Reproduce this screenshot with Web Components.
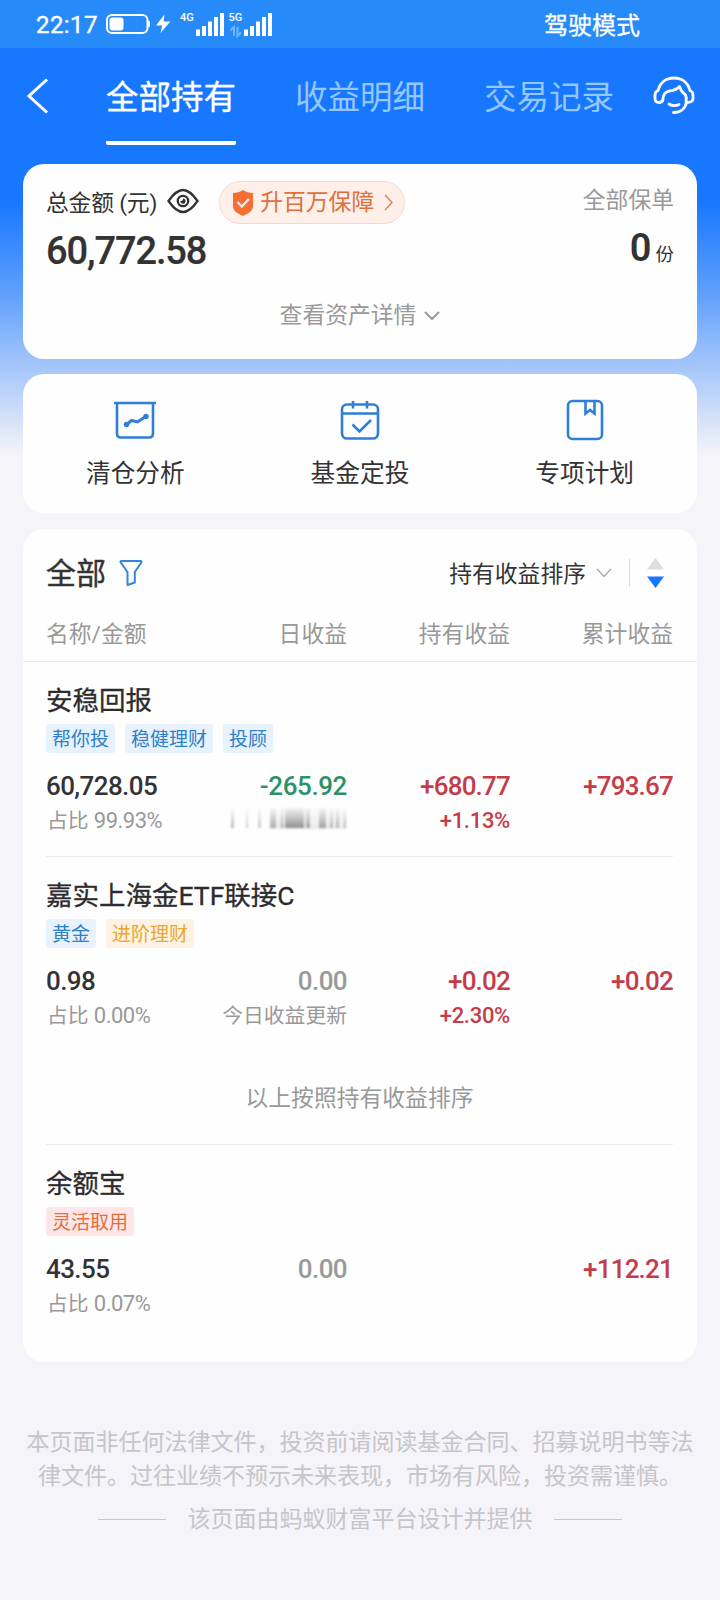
<!DOCTYPE html>
<html lang="zh-CN">
<head>
<meta charset="utf-8">
<title>全部持有</title>
<style>
  html { background: #f5f4f8; }

  body {
    margin: 0;
    min-height: 1600px;
    font-family: Roboto, "Noto Sans CJK SC", sans-serif;
    color: #333;
    background: linear-gradient(#1777ff 0, #1777ff 200px, #5c9efc 290px, #a3c5fa 365px, #f5f4f8 455px);
  }
</style>
</head>
<body>
<fund-status-bar time="22:17">驾驶模式</fund-status-bar>
<fund-nav>
  <fund-tab active>全部持有</fund-tab>
  <fund-tab>收益明细</fund-tab>
  <fund-tab>交易记录</fund-tab>
</fund-nav>

<fund-card>
  <fund-total amount="60,772.58" policies="0"></fund-total>
</fund-card>

<fund-card>
  <fund-tools>
    <fund-tool icon="chart">清仓分析</fund-tool>
    <fund-tool icon="calendar">基金定投</fund-tool>
    <fund-tool icon="book">专项计划</fund-tool>
  </fund-tools>
</fund-card>

<fund-card last>
  <fund-list-head></fund-list-head>
  <fund-row name="安稳回报" amount="60,728.05" ratio="99.93%" day="-265.92" masked hold="+680.77" rate="+1.13%" total="+793.67" line>
    <fund-tag>帮你投</fund-tag>
    <fund-tag>稳健理财</fund-tag>
    <fund-tag>投顾</fund-tag>
  </fund-row>
  <fund-row name="嘉实上海金ETF联接C" amount="0.98" ratio="0.00%" day="0.00" day-note="今日收益更新" hold="+0.02" rate="+2.30%" total="+0.02">
    <fund-tag>黄金</fund-tag>
    <fund-tag tone="gold">进阶理财</fund-tag>
  </fund-row>
  <fund-note>以上按照持有收益排序</fund-note>
  <fund-row name="余额宝" amount="43.55" ratio="0.07%" day="0.00" total="+112.21">
    <fund-tag tone="red">灵活取用</fund-tag>
  </fund-row>
</fund-card>

<fund-footer></fund-footer>

<script>
class StatusBar extends HTMLElement {
    constructor() {
        super();
        this.attachShadow({ mode: "open" });
        this.shadowRoot.innerHTML = `
        <style>
        :host {
          display: flex;
          align-items: center;
          height: 48px;
          padding: 0 80px 0 36px;
          box-sizing: border-box;
          background: #268bf9;
          color: #fff;
          font-size: 24px;
        }

        svg { display: block; margin-left: 7px; }
        .time { padding-top: 2px; letter-spacing: .4px; -webkit-text-stroke: .4px; }
        .mode { margin-left: auto; margin-top: -2px; -webkit-text-stroke: .3px; }
        </style>
        <span class="time">${this.getAttribute("time")}</span>
        <svg width="168" height="30" viewBox="105 9 168 30" fill="#fff">
          <rect x="107" y="15" width="40.500" height="18" rx="5" fill="none" stroke="#fff" stroke-width="2"/>
          <rect x="109.500" y="17.500" width="14" height="13" rx="3"/>
          <rect x="147.500" y="21" width="2.500" height="6" rx="1"/>
          <path d="M164.500 14.500 156 25.500h6.200l-1.700 7.500 9.800-11.500h-6.800z"/>
          <g font-family="Roboto" font-size="11" font-weight="500">
            <text x="180" y="21">4G</text>
            <text x="228.500" y="21">5G</text>
          </g>
          <path d="M196 29.500h4v6.500h-4zM202 26h4v10h-4zM208 21.500h4V36h-4zM214 17h4v19h-4zM220 13h4v23h-4z"/>
          <path d="M244 29.500h4v6.500h-4zM250 26h4v10h-4zM256 21.500h4V36h-4zM262 17h4v19h-4zM268 13h4v23h-4z"/>
          <path d="M230.500 30.500l3.500-3.500v9M241 32.500l-3.500 3.500v-9" fill="none" stroke="#6fb5fd" stroke-width="2"/>
        </svg>
        <span class="mode"><slot></slot></span>
        `;
    }
}

class Nav extends HTMLElement {
    constructor() {
        super();
        this.attachShadow({ mode: "open" });
        this.shadowRoot.innerHTML = `
        <style>
        :host {
          display: flex;
          height: 116px;
          padding: 0 25px 0 26px;
          box-sizing: border-box;
        }

        svg { display: block; flex: none; }
        .back { margin-top: 30px; }
        .help { margin-top: 27px; }

        .tabs {
          flex: 1;
          display: flex;
          justify-content: space-between;
          padding: 0 39px 0 57px;
        }
        </style>
        <svg class="back" width="23" height="36" viewBox="0 0 23 36" fill="none" stroke="#fff" stroke-width="3">
          <path d="M21 1.500 3 18l18 16.500"/>
        </svg>
        <div class="tabs"><slot></slot></div>
        <svg class="help" width="42" height="40" viewBox="0 0 42 40" fill="none" stroke="#fff" stroke-width="2.800" stroke-linecap="round" stroke-linejoin="round">
          <path d="M5 15.500C7 7.500 13 3 21 3s14 4.500 16 12.500"/>
          <path d="M5 15.500Q2 16.500 2 20.500v3q0 4 4 4 3.500 0 4-3C10 20 12 17 16 16c4-.5 7-.5 10.500-4.500 1 4 3.500 6.500 6 8.500 1 2 1 4 .5 6.500"/>
          <path d="M37 15.500q3 1 3 5v3q0 4-6.500 4"/>
          <path d="M33.500 27C32.500 34 27 37.500 20.500 37.500"/>
          <path d="M16 29c3 2 6.500 2 10 .5"/>
        </svg>
        `;
    }
}

class Tab extends HTMLElement {
    constructor() {
        super();
        this.attachShadow({ mode: "open" });
        this.shadowRoot.innerHTML = `
        <style>
        :host {
          display: block;
          height: 97px;
          box-sizing: border-box;
          padding-top: 26px;
          font-size: 32.500px;
          line-height: 48px;
          color: #94c6ff;
        }

        :host([active]) {
          color: #fff;
          -webkit-text-stroke: .3px;
          background: linear-gradient(#fff, #fff) bottom / 100% 4px no-repeat;
          border-radius: 2px;
        }
        </style>
        <slot></slot>
        `;
    }
}

class Card extends HTMLElement {
    constructor() {
        super();
        this.attachShadow({ mode: "open" });
        this.shadowRoot.innerHTML = `
        <style>
        :host {
          display: block;
          margin: 0 23px 15px;
          border-radius: 21px;
          background: #fefefe;
          overflow: hidden;
        }

        :host([last]) {
          margin-top: 16px;
          margin-bottom: 0;
          padding-bottom: 42px;
        }
        </style>
        <slot></slot>
        `;
    }
}

class Total extends HTMLElement {
    constructor() {
        super();
        this.attachShadow({ mode: "open" });
        this.shadowRoot.innerHTML = `
        <style>
        :host {
          display: block;
          height: 195px;
          padding: 17px 23px 0;
          box-sizing: border-box;
          font-size: 22.800px;
        }

        svg { display: block; flex: none; }
        .line { display: flex; justify-content: space-between; }
        .left { display: flex; align-items: center; height: 43px; }
        .label { line-height: 34px; padding-top: 2px; white-space: pre; letter-spacing: -.2px; }
        .eye { margin: -3px 20px 0 10px; }

        .pill {
          display: flex;
          align-items: center;
          height: 43px;
          width: 186px;
          box-sizing: border-box;
          padding-left: 12px;
          border: 1px solid #f5d8cc;
          border-radius: 22px;
          background: #fef0e9;
          color: #df6f3c;
        }

        .pill span { margin: 0 10px 0 6px; line-height: 34px; }
        .grey { color: #999; line-height: 40px; }

        .money {
          padding-top: 3px;
          font-size: 38px;
          font-weight: 500;
          line-height: 48px;
          letter-spacing: -1.1px;
          -webkit-text-stroke: .2px;
        }

        .count { line-height: 48px; font-size: 18.500px; }
        .count b { font-size: 38px; font-weight: 600; margin-right: 6px; letter-spacing: -2px; }

        .more {
          display: flex;
          justify-content: center;
          align-items: center;
          gap: 8px;
          margin-top: 20px;
          line-height: 34px;
          color: #999;
        }
        </style>
        <div class="line">
          <div class="left">
            <span class="label">总金额 (元)</span>
            <svg class="eye" width="32" height="26" viewBox="0 0 32 26" fill="none" stroke="#333" stroke-width="2.300">
              <path d="M1.500 13C7 5 11.500 2 16 2s9 3 14.500 11C25 21 20.500 24 16 24S7 21 1.500 13z"/>
              <circle cx="16" cy="13" r="5.200"/>
              <path d="M16 10.500a2.600 2.600 0 1 1-2.600 2.600q2.600 0 2.600-2.600z" fill="#333" stroke="none"/>
            </svg>
            <div class="pill">
              <svg width="22" height="28" viewBox="0 0 22 28">
                <path d="M11 1c3 2 6 3 10 3v13c0 5-4.500 7.500-10 10C5.500 24.500 1 22 1 17V4c4 0 7-1 10-3z" fill="#f36f35"/>
                <path d="M5.500 13l4.300 4.500 7-7.500" fill="none" stroke="#ffe9df" stroke-width="2.300"/>
              </svg>
              <span>升百万保障</span>
              <svg width="9" height="17" viewBox="0 0 9 17" fill="none" stroke="#dd835d" stroke-width="1.500"><path d="M1 1l7 7.500L1 16"/></svg>
            </div>
          </div>
          <span class="grey">全部保单</span>
        </div>
        <div class="line">
          <span class="money">${this.getAttribute("amount")}</span>
          <span class="count"><b>${this.getAttribute("policies")}</b>份</span>
        </div>
        <div class="more">查看资产详情
          <svg width="16" height="10" viewBox="0 0 16 10" fill="none" stroke="#999" stroke-width="2"><path d="M1 1l7 7 7-7"/></svg>
        </div>
        `;
    }
}

class Tools extends HTMLElement {
    constructor() {
        super();
        this.attachShadow({ mode: "open" });
        this.shadowRoot.innerHTML = `
        <style>
        :host {
          display: grid;
          grid-template-columns: repeat(3, 1fr);
          height: 139px;
        }
        </style>
        <slot></slot>
        `;
    }
}

const toolIcons = {
    chart: `<path d="M1 4h42M4 4v30.500q0 4 4 4h28q4 0 4-4V4"/>
      <path d="M13 26l5.500-4.500 6 1.500 9-6" stroke-width="3"/>
      <g fill="#2e7fd8" stroke="none"><circle cx="13.500" cy="25.500" r="2.700"/><circle cx="33" cy="17.500" r="2.700"/></g>`,
    calendar: `<rect x="4" y="5.500" width="36" height="34" rx="5"/>
      <path d="M4 14.500h36M15 2v7.500M29 2v7.500M14.500 25.500l7 7L33 21"/>`,
    book: `<rect x="5" y="2" width="34" height="38" rx="4.500"/>
      <path d="M22.500 2v12.500l4.500-3.500 4.500 3.500V2"/>`,
};

class Tool extends HTMLElement {
    constructor() {
        super();
        this.attachShadow({ mode: "open" });
        this.shadowRoot.innerHTML = `
        <style>
        :host {
          display: flex;
          flex-direction: column;
          align-items: center;
          padding-top: 25px;
          font-size: 24.700px;
          line-height: 36px;
        }

        svg { display: block; margin-bottom: 15px; }
        </style>
        <svg width="44" height="42" viewBox="0 0 44 42" fill="none" stroke="#2e7fd8" stroke-width="2.600">${toolIcons[this.getAttribute("icon")]}</svg>
        <span><slot></slot></span>
        `;
    }
}

class ListHead extends HTMLElement {
    constructor() {
        super();
        this.attachShadow({ mode: "open" });
        this.shadowRoot.innerHTML = `
        <style>
        :host {
          display: block;
          padding: 22px 23px 0;
          border-bottom: 1px solid #e8e8e8;
          font-size: 22.800px;
        }

        svg { display: block; flex: none; }
        .bar { display: flex; align-items: center; height: 44px; }
        .all { font-size: 30px; margin-right: 13px; padding-top: 2px; line-height: 44px; -webkit-text-stroke: .4px; }
        .sort { margin-left: auto; padding-top: 3px; line-height: 34px; }
        .arrow { margin: 0 17px 0 10px; }
        .split { width: 1px; height: 28px; margin-right: 17px; background: #ddd; }
        .order { margin-right: 10px; }

        .cols {
          display: grid;
          grid-template-columns: 138px 163px 163px 163px;
          padding: 22px 0 9px;
          line-height: 35px;
          color: #999;
          text-align: right;
        }

        .cols :first-child { text-align: left; }
        </style>
        <div class="bar">
          <span class="all">全部</span>
          <svg width="24" height="28" viewBox="0 0 24 28" fill="none" stroke="#3584dd" stroke-width="2" stroke-linejoin="round">
            <path d="M2.500 2h19q1.500 0 .8 1.500L15.800 13v10.500L8.500 26V13L1.700 3.500Q1 2 2.500 2z"/>
          </svg>
          <span class="sort">持有收益排序</span>
          <svg class="arrow" width="16" height="10" viewBox="0 0 16 10" fill="none" stroke="#aaa" stroke-width="1.400"><path d="M1 1l7 7.500L15 1"/></svg>
          <span class="split"></span>
          <svg class="order" width="17" height="32" viewBox="0 0 17 32">
            <path d="M8.500 1 17 12.500H0z" fill="#ddd"/>
            <path d="M8.500 31 17 19.500H0z" fill="#1777ff"/>
          </svg>
        </div>
        <div class="cols"><span>名称/金额</span><span>日收益</span><span>持有收益</span><span>累计收益</span></div>
        `;
    }
}

// positive is red, negative is green, zero stays grey
function toneOf(value) {
    if (value.startsWith("+")) return "up";
    if (value.startsWith("-")) return "down";
    return "flat";
}

class Row extends HTMLElement {
    constructor() {
        super();
        this.attachShadow({ mode: "open" });
        const get = (name) => this.getAttribute(name) || "";
        const dayNote = this.hasAttribute("masked") ? "<fund-mask></fund-mask>" : get("day-note");
        this.shadowRoot.innerHTML = `
        <style>
        :host {
          display: block;
          margin: 0 24px 0 23px;
          padding-top: 20px;
        }

        :host([line]) {
          padding-bottom: 19px;
          border-bottom: 1px solid #ececec;
        }

        .name { font-size: 26.500px; line-height: 38px; color: #2c2c2e; -webkit-text-stroke: .3px; }
        .tags { display: flex; gap: 10px; margin: 4px 0 16px; }

        .grid {
          display: grid;
          grid-template-columns: 138px 163px 163px 163px;
          grid-template-rows: 34px 34px;
          line-height: 34px;
          text-align: right;
        }

        .left { text-align: left; }
        .num { font-size: 26px; font-weight: 500; letter-spacing: -.6px; }
        .note { padding: 1px 0 0 1px; font-size: 20.800px; color: #999; white-space: nowrap; }
        .pct { font-size: 22px; letter-spacing: -.5px; }
        .rate { padding-top: 1px; font-size: 22px; font-weight: 500; letter-spacing: -.3px; }
        .up { color: #c53b48; }
        .num.up { letter-spacing: -.8px; }
        .down { color: #2b9268; }
        .num.down { letter-spacing: -.4px; }
        .flat { color: #999; }
        </style>
        <div class="name">${get("name")}</div>
        <div class="tags"><slot></slot></div>
        <div class="grid">
          <span class="num left">${get("amount")}</span>
          <span class="num ${toneOf(get("day"))}">${get("day")}</span>
          <span class="num up">${get("hold")}</span>
          <span class="num up">${get("total")}</span>
          <span class="note left">占比 <span class="pct">${get("ratio")}</span></span>
          <span class="note">${dayNote}</span>
          <span class="rate up">${get("rate")}</span>
        </div>
        `;
    }
}

// scrambled figures under the day's profit
class Mask extends HTMLElement {
    constructor() {
        super();
        this.attachShadow({ mode: "open" });
        const bars = [[3, 3, .6], [18, 2, .45], [30, 3, .5], [42, 6, .7], [53, 2, .8], [57, 19, 1],
            [78, 4, .8], [91, 7, .8], [102, 3, .6], [108, 3, .6], [116, 2, .6]];
        this.shadowRoot.innerHTML = `
        <style>
        :host { display: flex; justify-content: flex-end; padding-top: 4px; }
        svg { display: block; filter: blur(.8px); }
        </style>
        <svg width="119" height="21" viewBox="0 0 119 21">
          <defs>
            <linearGradient id="fade" x2="0" y2="1">
              <stop offset="0" stop-color="#aaa" stop-opacity=".12"/>
              <stop offset="1" stop-color="#8f8f8f"/>
            </linearGradient>
          </defs>
          <rect x="42" width="76" height="21" fill="url(#fade)" opacity=".18"/>
          ${bars.map(([x, w, o]) => `<rect x="${x}" width="${w}" height="20" fill="url(#fade)" opacity="${o}"/>`).join("")}
        </svg>
        `;
    }
}

class Tag extends HTMLElement {
    constructor() {
        super();
        this.attachShadow({ mode: "open" });
        this.shadowRoot.innerHTML = `
        <style>
        :host {
          display: block;
          height: 29px;
          padding: 1px 6px 0;
          box-sizing: border-box;
          border-radius: 3px;
          font-size: 19px;
          line-height: 29px;
          color: #2f7fc9;
          background: #e7f2fd;
        }

        :host([tone="gold"]) { color: #e8a52f; background: #fef3e2; }
        :host([tone="red"]) { color: #e2703a; background: #fde5e8; }
        </style>
        <slot></slot>
        `;
    }
}

class Note extends HTMLElement {
    constructor() {
        super();
        this.attachShadow({ mode: "open" });
        this.shadowRoot.innerHTML = `
        <style>
        :host {
          display: block;
          margin: 0 24px 0 23px;
          padding: 50px 0 28px;
          border-bottom: 1px solid #ececec;
          font-size: 22.800px;
          line-height: 34px;
          text-align: center;
          color: #999;
        }
        </style>
        <slot></slot>
        `;
    }
}

class Footer extends HTMLElement {
    constructor() {
        super();
        this.attachShadow({ mode: "open" });
        this.shadowRoot.innerHTML = `
        <style>
        :host {
          display: block;
          padding-top: 64px;
          font-size: 23px;
          line-height: 34px;
          text-align: center;
          color: #c6c5ca;
        }

        p { margin: 0; }
        .by { display: flex; justify-content: center; align-items: center; gap: 21.500px; margin-top: 9px; }
        .by::before, .by::after { content: ""; width: 68px; height: 1px; margin-top: -2px; background: #c6c5ca; }
        </style>
        <p>本页面非任何法律文件，投资前请阅读基金合同、招募说明书等法<br>律文件。过往业绩不预示未来表现，市场有风险，投资需谨慎。</p>
        <div class="by">该页面由蚂蚁财富平台设计并提供</div>
        `;
    }
}

customElements.define("fund-status-bar", StatusBar);
customElements.define("fund-nav", Nav);
customElements.define("fund-tab", Tab);
customElements.define("fund-card", Card);
customElements.define("fund-total", Total);
customElements.define("fund-tools", Tools);
customElements.define("fund-tool", Tool);
customElements.define("fund-list-head", ListHead);
customElements.define("fund-row", Row);
customElements.define("fund-mask", Mask);
customElements.define("fund-tag", Tag);
customElements.define("fund-note", Note);
customElements.define("fund-footer", Footer);
</script>
</body>
</html>
